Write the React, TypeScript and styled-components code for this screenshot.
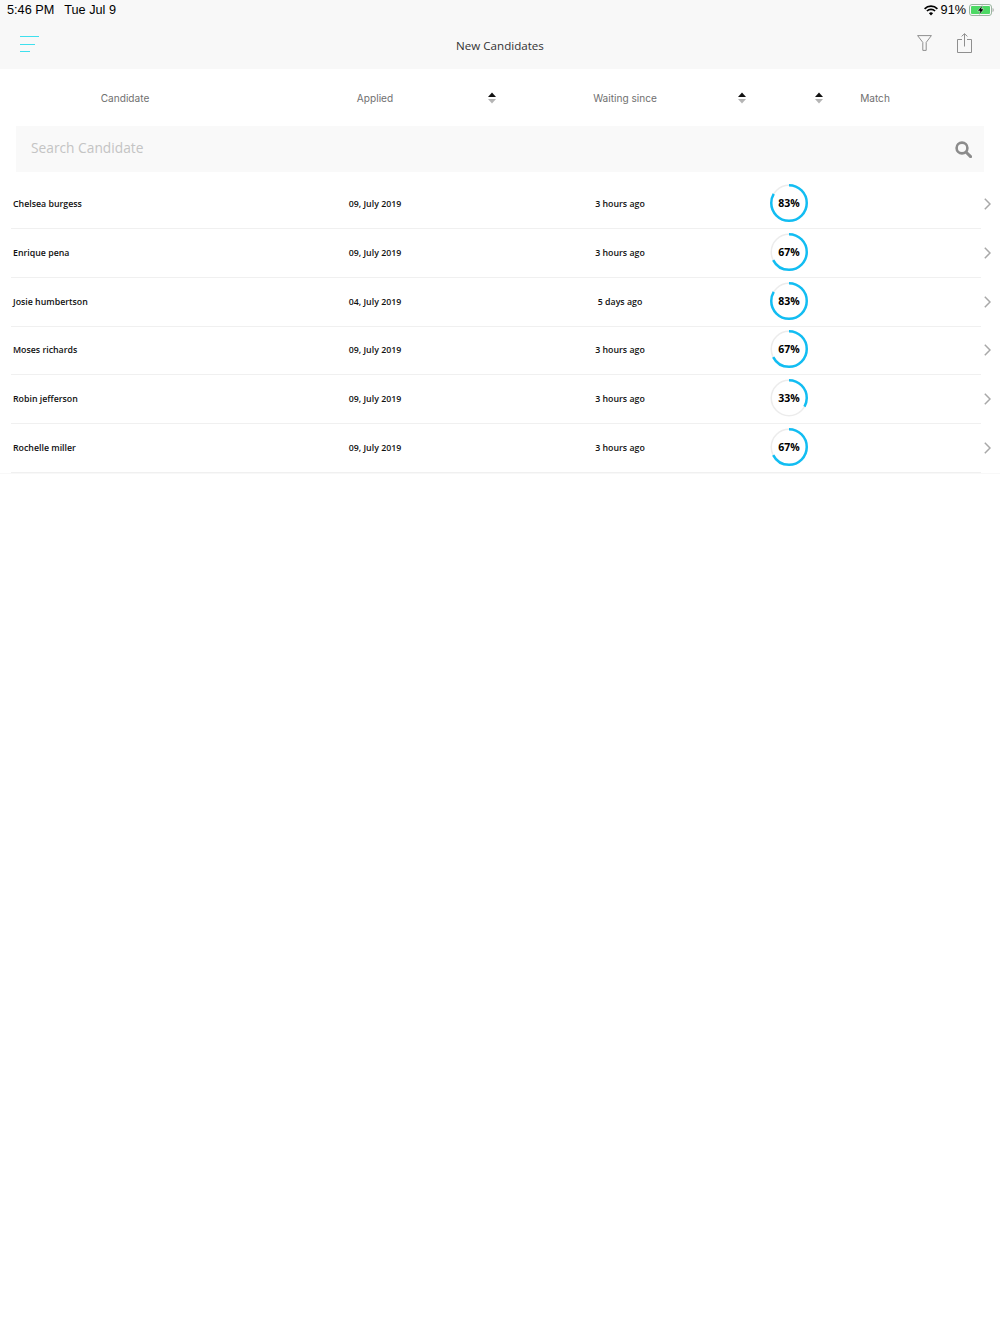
import React from 'react'
import styled, { createGlobalStyle } from 'styled-components'

const GlobalStyle = createGlobalStyle`
  html, body {
    margin: 0;
    background: #fff;
  }
  * {
    box-sizing: border-box;
  }
`

const candidates = [
  { name: 'Chelsea burgess', applied: '09, July 2019', waiting: '3 hours ago', match: 83 },
  { name: 'Enrique pena', applied: '09, July 2019', waiting: '3 hours ago', match: 67 },
  { name: 'Josie humbertson', applied: '04, July 2019', waiting: '5 days ago', match: 83 },
  { name: 'Moses richards', applied: '09, July 2019', waiting: '3 hours ago', match: 67 },
  { name: 'Robin jefferson', applied: '09, July 2019', waiting: '3 hours ago', match: 33 },
  { name: 'Rochelle miller', applied: '09, July 2019', waiting: '3 hours ago', match: 67 }
]

const Ring: React.FC<{ value: number }> = ({ value }) => {
  const r = 17.75
  const length = 2 * Math.PI * r
  return (
    <RingBox>
      <svg width="40" height="40" viewBox="0 0 40 40">
        <circle cx="20" cy="20" r={r} fill="none" stroke="#ececec" strokeWidth="1.5" />
        <circle
          cx="20"
          cy="20"
          r={r}
          fill="none"
          stroke="#12bdf2"
          strokeWidth="2.5"
          strokeDasharray={`${(length * value) / 100} ${length}`}
          transform="rotate(-90 20 20)"
        />
      </svg>
      <RingLabel>{value}%</RingLabel>
    </RingBox>
  )
}

const SortIcon = () => (
  <SortSvg width="8" height="12" viewBox="0 0 8 12">
    <path d="M4 0.5 L8 5 H0 Z" fill="#111" />
    <path d="M0 7 H8 L4 11.5 Z" fill="#b5b5b5" />
  </SortSvg>
)

const App: React.FC = () => {
  return (
    <Page>
      <GlobalStyle />
      <TopBar>
        <StatusBar>
          <StatusLeft>
            <span>5:46 PM</span>
            <span>Tue Jul 9</span>
          </StatusLeft>
          <StatusRight>
            <svg width="14" height="11" viewBox="0 0 14 11">
              <path d="M0.6 3.8 A9.2 9.2 0 0 1 13.4 3.8" fill="none" stroke="#000" strokeWidth="1.7" />
              <path d="M2.9 6 A6 6 0 0 1 11.1 6" fill="none" stroke="#000" strokeWidth="1.7" />
              <path d="M7 10.6 L4.9 8.2 A3 3 0 0 1 9.1 8.2 Z" fill="#000" />
            </svg>
            <span>91%</span>
            <svg width="25" height="12" viewBox="0 0 25 12">
              <rect x="0.5" y="0.5" width="22" height="11" rx="2.5" fill="none" stroke="#9ab59f" />
              <rect x="2" y="2" width="19" height="8" rx="1" fill="#4cd964" />
              <path d="M23.6 4 C25 4.3 25 7.7 23.6 8 Z" fill="#9a9a9a" />
              <path d="M13.5 1 L8.5 7 H11 L10 11 L15 5 H12.5 Z" fill="#000" stroke="#e8f7ea" strokeWidth="0.5" />
            </svg>
          </StatusRight>
        </StatusBar>
        <NavBar>
          <MenuButton>
            <MenuLine $width={19} />
            <MenuLine $width={15} />
            <MenuLine $width={10} />
          </MenuButton>
          <NavTitle>New Candidates</NavTitle>
          <NavActions>
            <svg width="15" height="16" viewBox="0 0 15 16">
              <path
                d="M0.6 0.6 H14.4 L9.2 7.4 V15.4 H5.8 V7.4 Z"
                fill="none"
                stroke="#8f8f8f"
                strokeWidth="1"
              />
            </svg>
            <svg width="15" height="20" viewBox="0 0 15 20">
              <path
                d="M5 6.5 H0.5 V19.5 H14.5 V6.5 H10 M7.5 13.5 V0.8 M4.6 3.4 L7.5 0.7 L10.4 3.4"
                fill="none"
                stroke="#8f8f8f"
                strokeWidth="1"
              />
            </svg>
          </NavActions>
        </NavBar>
      </TopBar>

      <ColumnHeader>
        <HeaderCell>
          <span />
          <HeaderLabel>Candidate</HeaderLabel>
        </HeaderCell>
        <HeaderCell>
          <span />
          <HeaderLabel>Applied</HeaderLabel>
          <SortEnd>
            <SortIcon />
          </SortEnd>
        </HeaderCell>
        <HeaderCell>
          <span />
          <HeaderLabel>Waiting since</HeaderLabel>
          <SortEnd>
            <SortIcon />
          </SortEnd>
        </HeaderCell>
        <HeaderCell>
          <SortStart>
            <SortIcon />
          </SortStart>
          <HeaderLabel>Match</HeaderLabel>
        </HeaderCell>
      </ColumnHeader>

      <SearchBar>
        <SearchInput placeholder="Search Candidate" readOnly />
        <svg width="17" height="17" viewBox="0 0 17 17">
          <circle cx="7" cy="7" r="5.4" fill="none" stroke="#8c8c8c" strokeWidth="2.6" />
          <path d="M11.2 11.2 L15.6 15.6" stroke="#8c8c8c" strokeWidth="3" strokeLinecap="round" />
        </svg>
      </SearchBar>

      <List>
        {candidates.map(c => (
          <Row key={c.name}>
            <Name>{c.name}</Name>
            <Cell>{c.applied}</Cell>
            <Cell>{c.waiting}</Cell>
            <RingCell>
              <Ring value={c.match} />
            </RingCell>
            <Chevron width="7" height="12" viewBox="0 0 7 12">
              <path d="M0.8 0.8 L6 6 L0.8 11.2" fill="none" stroke="#a8a8a8" strokeWidth="1.5" />
            </Chevron>
          </Row>
        ))}
      </List>
    </Page>
  )
}

const Page = styled.div`
  width: 1000px;
  min-height: 1334px;
  background: #fff;
`

const TopBar = styled.header`
  height: 69px;
  background: #f8f8f8;
`

const StatusBar = styled.div`
  height: 20px;
  display: flex;
  justify-content: space-between;
  align-items: center;
  padding: 0 6px 0 7px;
  font-family: 'Liberation Sans', Arial, sans-serif;
  font-size: 12.7px;
  color: #000;
`

const StatusLeft = styled.div`
  display: flex;
  gap: 10px;
`

const StatusRight = styled.div`
  display: flex;
  align-items: center;
  gap: 3px;
`

const NavBar = styled.div`
  height: 49px;
  display: grid;
  grid-template-columns: 1fr auto 1fr;
  align-items: center;
  padding: 0 28px 0 20px;
`

const MenuButton = styled.div`
  display: flex;
  flex-direction: column;
  gap: 6.7px;
  padding-bottom: 1px;
`

const MenuLine = styled.div<{ $width: number }>`
  width: ${props => props.$width}px;
  height: 1px;
  background: #3fe0ee;
`

const NavTitle = styled.div`
  font-family: 'Open Sans', sans-serif;
  font-size: 11.6px;
  color: #333;
  padding-top: 2px;
  transform: translateX(4px);
`

const NavActions = styled.div`
  display: flex;
  justify-content: flex-end;
  align-items: center;
  gap: 25px;
  padding-bottom: 3px;
`

const ColumnHeader = styled.div`
  height: 57px;
  padding-top: 1px;
  display: grid;
  grid-template-columns: repeat(4, 250px);
`

const HeaderCell = styled.div`
  display: grid;
  grid-template-columns: 1fr auto 1fr;
  align-items: center;
`

const HeaderLabel = styled.span`
  font-family: 'Inter', sans-serif;
  font-size: 10.1px;
  color: #707070;
`

const SortEnd = styled.div`
  display: flex;
  justify-content: flex-end;
  padding-right: 4px;
`

const SortStart = styled.div`
  display: flex;
  justify-content: flex-end;
  padding-right: 37px;
`

const SortSvg = styled.svg`
  display: block;
`

const SearchBar = styled.div`
  height: 46px;
  margin: 0 16px;
  padding: 0 12px 0 15px;
  display: flex;
  align-items: center;
  justify-content: space-between;
  background: #f9f9f9;
`

const SearchInput = styled.input`
  flex: 1;
  border: none;
  outline: none;
  background: transparent;
  padding: 0 0 4px;
  font-family: 'Open Sans', sans-serif;
  font-size: 13.75px;
  color: #333;
  &::placeholder {
    color: #c4c4c4;
    opacity: 1;
  }
`

const List = styled.div`
  margin-top: 8.2px;
  border-bottom: 1px solid #f8f8f8;
`

const Row = styled.div`
  height: 48.8px;
  margin: 0 19px 0 11px;
  padding-left: 2px;
  display: grid;
  grid-template-columns: 237px 250px 240px 98px 1fr;
  align-items: center;
  border-bottom: 1px solid #f0f0f0;
  font-family: 'Open Sans', sans-serif;
  font-size: 8.8px;
  font-weight: 600;
  color: #111;
`

const Name = styled.div``

const Cell = styled.div`
  text-align: center;
`

const RingCell = styled.div`
  display: flex;
  justify-content: center;
`

const RingBox = styled.div`
  position: relative;
  width: 40px;
  height: 40px;
  margin-top: -2px;
`

const RingLabel = styled.span`
  position: absolute;
  inset: 0;
  display: flex;
  align-items: center;
  justify-content: center;
  font-family: 'Open Sans', sans-serif;
  font-size: 10.5px;
  font-weight: 700;
  color: #000;
`

const Chevron = styled.svg`
  display: block;
  justify-self: end;
  margin-right: -10px;
`

export default App
